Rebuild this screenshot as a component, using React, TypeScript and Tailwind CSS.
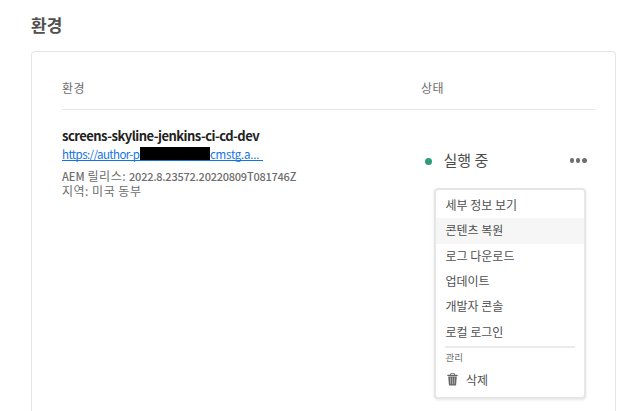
import React from "react";

const menuItems = [
  { label: "세부 정보 보기" },
  { label: "콘텐츠 복원", active: true },
  { label: "로그 다운로드" },
  { label: "업데이트" },
  { label: "개발자 콘솔" },
  { label: "로컬 로그인" },
];

function TrashIcon() {
  return (
    <svg width="11" height="13" viewBox="0 0 11 13" fill="#666666">
      <path d="M3.2 1.7V1Q3.2.3 3.9.3H7.1Q7.8.3 7.8 1V1.7H10.2Q10.7 1.7 10.7 2.2V3H.3V2.2Q.3 1.7.8 1.7ZM4.1 1.7H6.9V1.1H4.1Z" />
      <path d="M1.2 3.6H9.8L9.1 11.8Q9 12.6 8.3 12.6H2.7Q2 12.6 1.9 11.8Z" />
      <path d="M3.4 4.5L3.7 11.2M5.5 4.5V11.2M7.6 4.5L7.3 11.2" stroke="#c4c4c4" strokeWidth="0.7" fill="none" />
    </svg>
  );
}

function ActionMenu() {
  return (
    <div className="absolute left-[434px] top-[188px] h-[211px] w-[152px] rounded-[4px] border-2 border-[#e6e6e6] bg-white pt-[3px] text-[12px] text-[#505050] shadow-[0_1px_3px_rgba(0,0,0,0.1)]">
      {menuItems.map((item) => (
        <div
          key={item.label}
          className={`flex h-[25.3px] items-center whitespace-nowrap pb-[1px] pl-[9.5px] ${item.active ? "bg-[#f6f6f6]" : ""}`}
        >
          {item.label}
        </div>
      ))}
      <div className="mx-[9px] mt-[1.2px] h-[2px] bg-[#eaeaea]" />
      <div className="mt-[2px] pl-[9.5px] text-[9.5px] leading-[14px] text-[#6e6e6e]">관리</div>
      <div className="mt-[6px] flex h-[20px] items-center gap-[8px] pl-[11px]">
        <TrashIcon />
        <span>삭제</span>
      </div>
    </div>
  );
}

export default function App() {
  return (
    <main className="relative h-[411px] w-[632px] overflow-hidden bg-white pl-[31px] pt-[12px] font-['Noto_Sans_CJK_KR',sans-serif] text-[#4b4b4b]">
      <h1 className="h-[39px] text-[17px] font-bold leading-[26px] text-[#505050]">환경</h1>
      <section className="h-[400px] w-[585px] rounded-[4px] border border-[#e4e4e4] px-[30px] pt-[26px]">
        <div className="flex h-[32px] w-[533px] border-b border-[#e6e6e6] text-[12px] leading-[20px] tracking-[0.4px] text-[#6e6e6e]">
          <div className="w-[359px]">환경</div>
          <div>상태</div>
        </div>
        <div className="flex w-[533px]">
          <div className="w-[359px] whitespace-nowrap pt-[16px]">
            <div className="h-[21px] text-[13px] font-bold leading-[20px] tracking-[-0.52px] text-[#222]">
              screens-skyline-jenkins-ci-cd-dev
            </div>
            <a className="flex h-[14px] w-[201px] border-b border-[#1473e6] text-[11.5px] leading-[14px] tracking-[-0.6px] text-[#1473e6]">
              <span className="w-[78px]">https://author-p</span>
              <span className="h-[13px] w-[70px] bg-black" />
              <span className="tracking-[-0.25px]">cmstg.a...</span>
            </a>
            <div className="mt-[7px] text-[12px] text-[#6e6e6e]">
              <div className="flex h-[15px] items-center gap-[3px] leading-[14px]">
                <span className="text-[11px] font-medium">AEM</span>
                <span className="tracking-[0.5px]">릴리스:</span>
                <span className="text-[11px] font-medium tracking-[-0.23px]">2022.8.23572.20220809T081746Z</span>
              </div>
              <div className="h-[15px] leading-[15px] tracking-[0.5px]">지역: 미국 동부</div>
            </div>
          </div>
          <div className="flex h-[101px] flex-1 items-center pl-[3.5px]">
            <span className="mt-[2px] size-[7px] rounded-full bg-[#2d9d78]" />
            <span className="ml-[12px] text-[15px]">실행 중</span>
            <span className="ml-auto mr-[8.5px] flex gap-[1.75px]">
              <i className="size-[4.5px] rounded-full bg-[#6e6e6e]" />
              <i className="size-[4.5px] rounded-full bg-[#6e6e6e]" />
              <i className="size-[4.5px] rounded-full bg-[#6e6e6e]" />
            </span>
          </div>
        </div>
      </section>
      <ActionMenu />
    </main>
  );
}
